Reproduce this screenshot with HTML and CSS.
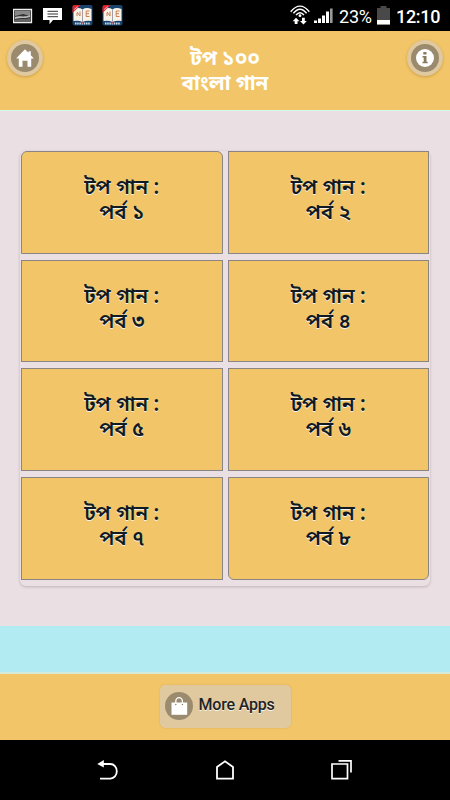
FILE: index.html
```html
<!DOCTYPE html>
<html lang="bn">
<head>
<meta charset="utf-8">
<title>টপ ১০০ বাংলা গান</title>
<link rel="stylesheet" href="styles.css">
</head>
<body>
<div class="status">
  <div class="notices">
    <svg width="20" height="16" viewBox="0 0 20 16"><path d="M.5 1.5h18v13H.5z" fill="#333" stroke="#eee" stroke-width="1.3"/><path d="M2 3h15v5L10 6 2 8z" fill="#888"/><path d="M2 9c5-2 8 1 15-2v2c-6 2-9 0-15 2z" fill="#bbb"/><path d="M2 12c6-2 10 0 15-2v3H2z" fill="#666"/></svg>
    <svg width="20" height="18" viewBox="0 0 20 18"><path d="M0 1h19v12h-9l-3.500 4.200V13H0z" fill="#fff"/><path d="M4.500 4.300h10.500M4.500 7h10.500M4.500 9.700h10.500" stroke="#333"/></svg>
    <svg class="book" width="21" height="21" viewBox="0 0 21 21"><use href="#book"/></svg>
    <svg class="book" width="21" height="21" viewBox="0 0 21 21"><g id="book"><rect x=".5" width="20" height="20.500" rx="2" fill="#19446e"/><path d="M1.500 16V4Q7 2 10.500 4.500 14 2 19.500 4v12q-5-1-9 1-4-2-9-1z" fill="#f8f3e8"/><path d="M10.500 4.500V17" stroke="#889" stroke-width=".8"/><path d="M.5 8V2Q.5 0 3 0h5.500z" fill="#e5202b"/><path d="M2 4.500l4-3" stroke="#fff" stroke-width=".6"/><path d="M5 7l3 4V6.500M5 8v3M17.500 6h-3.300v5.500h3.300M14.200 8.700H17" fill="none" stroke="#c97e50"/><path d="M3 18.500h15" stroke="#c8dcea" stroke-width="2" stroke-dasharray="1.500 .7"/><path d="M9 17.500l3 1" stroke="#e5202b"/></g></svg>
  </div>
  <div class="system">
    <svg width="20" height="21" viewBox="0 0 20 21"><g fill="none" stroke="#fff" stroke-width="1.400"><path d="M.7 6.700Q10-4.500 19.300 6.700M3.400 8.300Q10 .2 16.600 8.300M6 10q4-4.600 8 0"/></g><circle cx="10" cy="10.700" r="1.400" fill="#fff"/><path d="M6 12.800l-3.300 3.400h2V19h2.800v-2.800h2zM13.500 19.500l3.300-3.400h-2v-3.300h-2.800v3.300h-2z" fill="#fff"/></svg>
    <svg width="19" height="16" viewBox="0 0 19 16"><path d="M0 12.500h3V15H0zM4 10.500h3V15H4zM8 7.500h3V15H8zM12 3.500h3V15h-3z" fill="#fff"/><path d="M16 .5h2.600V15H16z" fill="#999"/></svg>
    <span class="percent">23%</span>
    <svg width="13" height="19" viewBox="0 0 13 19"><path d="M0 2h3.500V0h6v2H13v16.500H0z" fill="#494949"/><path d="M0 14h13v4.500H0z" fill="#fff"/></svg>
    <span class="clock">12:10</span>
  </div>
</div>
<header class="header">
  <a class="round"><svg width="28" height="28" viewBox="0 0 28 28"><circle cx="14" cy="14" r="14" fill="#9a8b6e"/><path d="M14 5.300l3.500 3.500V7.200h2.300v4L22.500 14v.6h-2.300v8.200h-3.700v-6h-5v6H7.800v-8.200H5.500V14z" fill="#fff"/></svg></a>
  <h1 class="title">টপ ১০০<br>বাংলা গান</h1>
  <a class="round"><svg width="28" height="28" viewBox="0 0 28 28"><circle cx="14" cy="14" r="14" fill="#9a8b6e"/><circle cx="14" cy="14" r="9" fill="#fff"/><path d="M12.300 8h3.200v2.500h-3.200zM11.500 12h4v5.800h1.200v1.400h-5.200v-1.400h1.200v-4.400h-1.200z" fill="#8a7a5c"/></svg></a>
</header>
<main class="content">
  <div class="grid">
    <a class="card"><span>টপ গান :<br>পর্ব ১</span></a>
    <a class="card"><span>টপ গান :<br>পর্ব ২</span></a>
    <a class="card"><span>টপ গান :<br>পর্ব ৩</span></a>
    <a class="card"><span>টপ গান :<br>পর্ব ৪</span></a>
    <a class="card"><span>টপ গান :<br>পর্ব ৫</span></a>
    <a class="card"><span>টপ গান :<br>পর্ব ৬</span></a>
    <a class="card"><span>টপ গান :<br>পর্ব ৭</span></a>
    <a class="card"><span>টপ গান :<br>পর্ব ৮</span></a>
  </div>
</main>
<div class="band"></div>
<footer class="footer">
  <a class="more"><svg width="28" height="28" viewBox="0 0 28 28"><circle cx="14" cy="14" r="14" fill="#9a8b6e"/><path d="M6.500 10.500h15.700v12.300H6.500z" fill="#fff"/><path d="M10.800 12.500V9.300a3.300 3.600 0 0 1 6.600 0v3.200" fill="none" stroke="#fff" stroke-width="1.300"/><circle cx="10.800" cy="12.500" r=".7" fill="#8a7a5c"/><circle cx="17.400" cy="12.500" r=".7" fill="#8a7a5c"/></svg><span>More Apps</span></a>
</footer>
<nav class="nav">
  <svg width="22" height="22" viewBox="0 0 22 22"><path d="M5 5h8.500a6.300 7.300 0 0 1 0 14.600H3" fill="none" stroke="#fff" stroke-width="1.800"/><path d="M.3 5l6.500-4v7.600z" fill="#fff"/></svg>
  <svg width="20" height="22" viewBox="0 0 20 22"><path d="M2 19.700V8l8-5.700L18 8v11.700z" fill="none" stroke="#fff" stroke-width="1.800"/></svg>
  <svg width="22" height="22" viewBox="0 0 22 22"><path d="M2 5h15.500v14.700H2zM8.500 1.800H21V13.500" fill="none" stroke="#fff" stroke-width="1.700"/></svg>
</nav>
</body>
</html>
```
FILE: styles.css
```css
* { box-sizing: border-box; }
body {
  margin: 0;
  width: 450px;
  height: 800px;
  display: flex;
  flex-direction: column;
  overflow: hidden;
  background: #000;
  font-family: Roboto, "Noto Sans Bengali", "Noto Sans", sans-serif;
}
svg { display: block; flex: none; }
.status {
  height: 31px;
  padding: 0 10px 0 13px;
  display: flex;
  justify-content: space-between;
  color: #fff;
}
.notices { display: flex; align-items: center; gap: 10px; }
.notices .book { position: relative; left: -1px; margin-right: -1px; }
.system { display: flex; align-items: center; }
.system svg + svg { margin-left: 4px; }
.percent { margin: 2px 5px 0 6px; font-size: 18px; width: 33px; letter-spacing: -0.2px; }
.clock { margin: 2px 0 0 6px; font-size: 18px; font-weight: 500; width: 44px; letter-spacing: -0.3px; }
.header {
  height: 80px;
  padding: 9px 7px 0;
  display: flex;
  justify-content: space-between;
  background: #f2c668;
  border-bottom: 1px solid #d6fae9;
}
.round {
  width: 36px;
  height: 36px;
  padding: 4px;
  border-radius: 50%;
  background: #e0c99e;
  box-shadow: 0 1px 3px rgba(150, 100, 20, 0.4);
}
.title {
  margin: 6px 0 0;
  font-size: 20.6px;
  line-height: 25px;
  font-weight: 700;
  text-align: center;
  color: #fff;
}
.content {
  height: 515px;
  padding: 40px 20px 0;
  background: #eadfe3;
}
.grid {
  height: 435px;
  padding: 0 1px;
  display: grid;
  grid-template-columns: 1fr 1fr;
  grid-template-rows: repeat(4, 102.8px);
  gap: 5.900px 5px;
  border-radius: 6px;
  box-shadow: 0 1px 3px rgba(80, 50, 60, 0.25);
}
.card {
  padding-top: 24px;
  border: 1px solid #8a8583;
  background: #f2c668;
  color: #111a20;
  font-family: "Noto Sans Bengali", "Noto Sans", Roboto, sans-serif;
  font-size: 20.6px;
  line-height: 25px;
  font-weight: 600;
  text-align: center;
  text-shadow: 0 1px 0 #f3f3f3;
}
.card:first-child { border-top-left-radius: 6px; border-top-right-radius: 6px; }
.card:last-child { border-bottom-left-radius: 6px; border-bottom-right-radius: 6px; }
.band { height: 46px; background: #b2ebf2; }
.footer {
  height: 68px;
  padding-top: 11px;
  display: flex;
  justify-content: center;
  align-items: flex-start;
  background: #f2c668;
  border-top: 2px solid #d6ecd8;
}
.more {
  width: 131px;
  height: 43px;
  padding: 0 5px;
  display: flex;
  align-items: center;
  gap: 6px;
  border-radius: 5px;
  background: #e0c99e;
  box-shadow: 0 0 2px rgba(205, 160, 80, 0.7);
  color: #222;
  font-size: 16px;
  font-weight: 500;
  letter-spacing: -0.2px;
  white-space: nowrap;
  text-shadow: 0 1px 0 #f3f3f3;
}
.more svg { margin-top: -1px; }
.more span { margin-top: -5px; }
.nav {
  height: 60px;
  padding: 0 98px 1px 97px;
  display: flex;
  justify-content: space-between;
  align-items: center;
}
```
